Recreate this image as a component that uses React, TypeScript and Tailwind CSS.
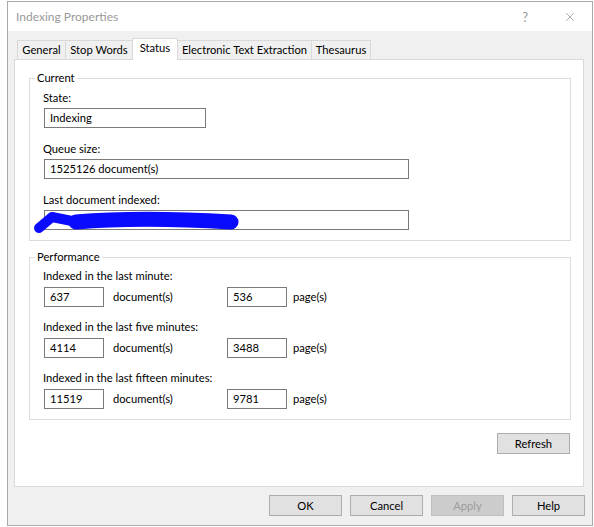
import { X } from "lucide-react";

const font = { fontFamily: "Lato, 'Liberation Sans', sans-serif" };

const Field = ({ value, className }: { value: string; className: string }) => (
  <div className={`h-[20px] border border-[#7a7a7a] bg-white pl-[5px] leading-[18px] ${className}`}>
    {value}
  </div>
);

const Btn = ({ label, disabled }: { label: string; disabled?: boolean }) => (
  <button
    className={`w-[73px] h-[21px] border leading-[19px] ${
      disabled
        ? "bg-[#cccccc] border-[#bfbfbf] text-[#9d9d9d]"
        : "bg-[#e1e1e1] border-[#adadad] text-black"
    }`}
  >
    {label}
  </button>
);

const tabs = [
  { name: "General", w: "w-[49px]" },
  { name: "Stop Words", w: "w-[68px]" },
  { name: "Status", w: "w-[46px]", active: true },
  { name: "Electronic Text Extraction", w: "w-[135px]" },
  { name: "Thesaurus", w: "w-[60px]" },
];

const perf = [
  { label: "Indexed in the last minute:", docs: "637", pages: "536" },
  { label: "Indexed in the last five minutes:", docs: "4114", pages: "3488" },
  { label: "Indexed in the last fifteen minutes:", docs: "11519", pages: "9781" },
];

export default function App() {
  return (
    <div className="w-[594px] h-[527px] bg-white text-[11.2px] leading-[16px] text-black" style={font}>
      <div className="ml-[7px] mt-[1px] w-[586px] h-[525px] border border-[#aaaaaa] bg-[#f0f0f0] flex flex-col">
        {/* title bar */}
        <div className="h-[29px] bg-white flex items-center pl-[8px] text-[#999999]">
          <span className="text-[12px]">Indexing Properties</span>
          <span className="ml-auto text-[13px] mr-[35px]">?</span>
          <X className="w-[14px] h-[14px] mr-[15px]" strokeWidth={1.2} color="#8a8a8a" />
        </div>

        <div className="pl-[6px] pt-[7px]">
          {/* tabs */}
          <div className="relative z-10 flex items-end h-[21px] pl-[3px] whitespace-nowrap">
            {tabs.map((t, i) =>
              t.active ? (
                <div
                  key={t.name}
                  className={`${t.w} h-[22px] -mb-[1px] -ml-px bg-white border border-b-0 border-[#d9d9d9] text-center leading-[18px]`}
                >
                  {t.name}
                </div>
              ) : (
                <div
                  key={t.name}
                  className={`${t.w} h-[19px] ${i > 0 ? "-ml-px" : ""} bg-[#f0f0f0] border border-b-0 border-[#d9d9d9] text-center leading-[18px]`}
                >
                  {t.name}
                </div>
              )
            )}
          </div>

          {/* panel */}
          <div className="w-[570px] h-[428px] border border-[#d9d9d9] bg-white flex flex-col">
            <fieldset className="ml-[14px] mt-[10px] w-[542px] border border-[#dcdcdc] px-[13px] pb-[10px]">
              <legend className="-ml-[8px] px-[2px] leading-[16px]">Current</legend>
              <div className="pt-[4px] flex flex-col gap-[13px]">
                <div>
                  <div>State:</div>
                  <Field value="Indexing" className="mt-[2px] ml-px w-[162px]" />
                </div>
                <div>
                  <div>Queue size:</div>
                  <Field value="1525126 document(s)" className="mt-[2px] ml-px w-[365px]" />
                </div>
                <div>
                  <div>Last document indexed:</div>
                  <div className="relative mt-[2px] ml-px">
                    <Field value="" className="w-[365px]" />
                    <svg className="absolute -left-[12px] top-0 overflow-visible" width="210" height="24">
                      <path d="M 7 18 L 20 7 L 40 11" fill="none" stroke="#0a0aff" strokeWidth="10" strokeLinecap="round" strokeLinejoin="round" />
                      <path d="M 44 12 C 90 8 150 9 199 12" fill="none" stroke="#0a0aff" strokeWidth="15" strokeLinecap="round" />
                    </svg>
                  </div>
                </div>
              </div>
            </fieldset>

            <fieldset className="ml-[14px] mt-[8px] w-[542px] border border-[#dcdcdc] px-[13px] pb-[10px]">
              <legend className="-ml-[8px] px-[2px] leading-[16px]">Performance</legend>
              <div className="pt-[3px] flex flex-col gap-[12px]">
                {perf.map((p) => (
                  <div key={p.label}>
                    <div>{p.label}</div>
                    <div className="mt-[3px] ml-px flex items-center">
                      <Field value={p.docs} className="w-[60px]" />
                      <span className="ml-[9px] w-[114px]">document(s)</span>
                      <Field value={p.pages} className="w-[60px]" />
                      <span className="ml-[6px]">page(s)</span>
                    </div>
                  </div>
                ))}
              </div>
            </fieldset>

            <div className="mt-[13px] flex justify-end pr-[13px]">
              <Btn label="Refresh" />
            </div>
          </div>

          {/* footer buttons */}
          <div className="mt-[8px] flex justify-end gap-[8px] pr-[7px]">
            <Btn label="OK" />
            <Btn label="Cancel" />
            <Btn label="Apply" disabled />
            <Btn label="Help" />
          </div>
        </div>
      </div>
    </div>
  );
}
